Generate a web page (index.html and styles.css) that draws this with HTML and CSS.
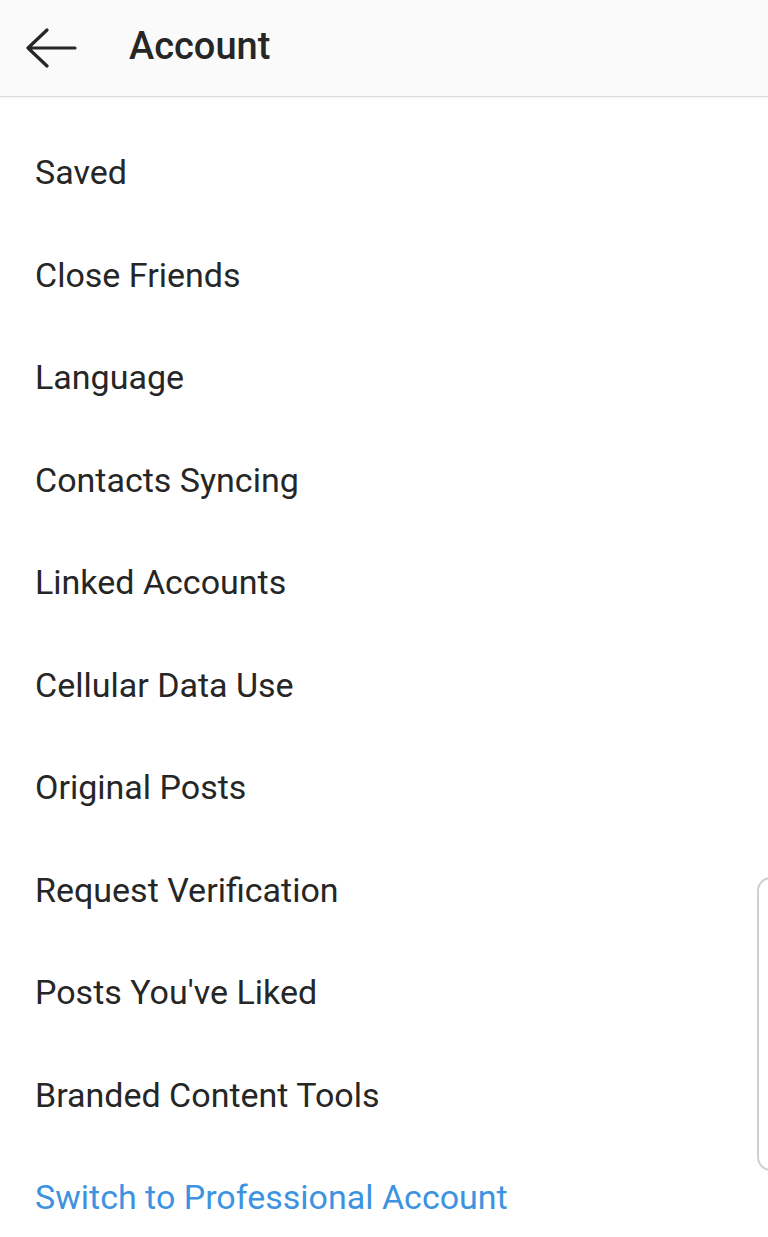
FILE: index.html
```html
<!DOCTYPE html>
<html lang="en">
<head>
    <meta charset="UTF-8">
    <meta name="viewport" content="width=device-width, initial-scale=1.0">
    <title>Account</title>
    <link rel="stylesheet" href="styles.css">
</head>
<body>
    <header class="top-bar">
        <button class="back-btn" aria-label="Back">
            <svg width="52" height="40" viewBox="0 0 52 40">
                <path d="M50 20H3M22 2L3 20l19 18" fill="none" stroke="#262626" stroke-width="3.2" stroke-linecap="round" stroke-linejoin="round"/>
            </svg>
        </button>
        <h1>Account</h1>
    </header>

    <ul class="menu">
        <li>Saved</li>
        <li>Close Friends</li>
        <li>Language</li>
        <li>Contacts Syncing</li>
        <li>Linked Accounts</li>
        <li>Cellular Data Use</li>
        <li>Original Posts</li>
        <li>Request Verification</li>
        <li>Posts You've Liked</li>
        <li>Branded Content Tools</li>
        <li class="link">Switch to Professional Account</li>
    </ul>

    <div class="side-handle"></div>
</body>
</html>
```

FILE: styles.css
```css
:root {
    --text-color: #262626;
    --link-color: #3d93e0;
    --bar-bg: #fafafa;
}

* {
    box-sizing: border-box;
}

body {
    margin: 0;
    background: #ffffff;
    color: var(--text-color);
    font-family: Roboto, "Noto Sans", sans-serif;
    overflow: hidden;
}

.top-bar {
    height: 97px;
    display: flex;
    align-items: center;
    background: var(--bar-bg);
    border-bottom: 1px solid #dbdbdb;
    box-shadow: 0 1px 2px rgba(0,0,0,0.06);
}

.back-btn {
    margin-left: 25px;
    padding: 0;
    border: none;
    background: none;
    display: flex;
}

.top-bar h1 {
    margin: 0 0 4px 52px;
    font-size: 38px;
    font-weight: 500;
}

.menu {
    list-style: none;
    margin: 0;
    padding: 24px 0 0 35px;
}

.menu li {
    height: 102.5px;
    display: flex;
    align-items: center;
    font-size: 34px;
}

.menu li.link {
    color: var(--link-color);
}

.side-handle {
    position: absolute;
    left: 757px;
    top: 877px;
    width: 30px;
    height: 294px;
    border: 2px solid #cfcfcf;
    border-radius: 14px;
}
```
